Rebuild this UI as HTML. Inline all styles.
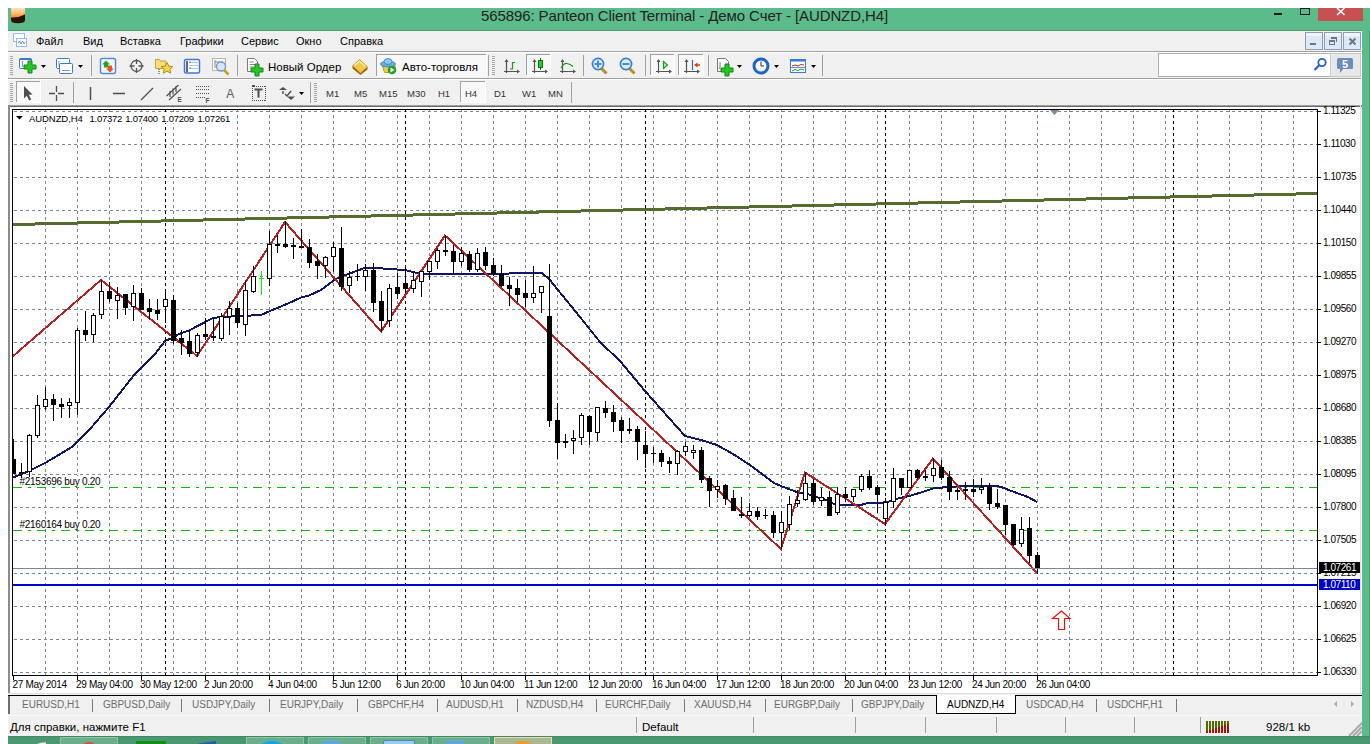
<!DOCTYPE html><html><head><meta charset="utf-8"><style>
*{margin:0;padding:0;box-sizing:border-box}
html,body{width:1370px;height:744px;overflow:hidden;background:#fff}
body{position:relative;font-family:"Liberation Sans",sans-serif;color:#000}
.a{position:absolute}
.t{position:absolute;white-space:nowrap;line-height:1}
.tb{position:absolute;background:#f0f0f0}
.pl{position:absolute;left:1323px;font-size:10px;letter-spacing:-0.45px;white-space:nowrap;line-height:10px}
.tl{position:absolute;top:680px;font-size:10px;letter-spacing:-0.33px;white-space:nowrap;line-height:10px}
.tab{position:absolute;top:699px;font-size:10px;color:#6d6d6d;white-space:nowrap;line-height:12px}
.sep{position:absolute;width:1px;background:#7a7a7a}
</style></head><body>
<div class="a" style="left:8px;top:8px;width:1362px;height:23px;background:#5bbb8a"></div>
<div class="a" style="left:1362px;top:31px;width:8px;height:705px;background:#5bbb8a"></div>
<div class="a" style="left:1318px;top:8px;width:45px;height:13px;background:#c75050"></div>
<div class="t" style="left:481px;top:8px;font-size:15px;line-height:16px;letter-spacing:-0.1px;color:#222">565896: Panteon Client Terminal - Демо Счет - [AUDNZD,H4]</div>
<div class="tb" style="left:8px;top:31px;width:1354px;height:74px"></div>
<div class="a" style="left:8px;top:51px;width:1354px;height:1px;background:#a0a0a0"></div>
<div class="a" style="left:8px;top:52px;width:1354px;height:1px;background:#fff"></div>
<div class="a" style="left:8px;top:78px;width:1354px;height:1px;background:#a0a0a0"></div>
<div class="a" style="left:8px;top:79px;width:1354px;height:1px;background:#fff"></div>
<div class="t" style="left:36px;top:35px;font-size:11px;line-height:12px">Файл</div>
<div class="t" style="left:83px;top:35px;font-size:11px;line-height:12px">Вид</div>
<div class="t" style="left:120px;top:35px;font-size:11px;line-height:12px">Вставка</div>
<div class="t" style="left:180px;top:35px;font-size:11px;line-height:12px">Графики</div>
<div class="t" style="left:241px;top:35px;font-size:11px;line-height:12px">Сервис</div>
<div class="t" style="left:296px;top:35px;font-size:11px;line-height:12px">Окно</div>
<div class="t" style="left:340px;top:35px;font-size:11px;line-height:12px">Справка</div>
<svg width="1370" height="80" viewBox="0 28 1370 80" style="position:absolute;left:0;top:28px">
<rect x="13" y="32" width="16" height="17" fill="#f6f6f6"/>
<rect x="13.5" y="33.5" width="11" height="8" fill="#fff" stroke="#3a7af0" stroke-width="1" stroke-dasharray="1 1"/>
<rect x="16.5" y="38.5" width="10" height="8" fill="#fff" stroke="#3a7af0" stroke-width="1" stroke-dasharray="1 1"/>
<path d="M18,43 l1.5,-2 1.5,3 1.5,-3 1.5,3 1.5,-2" stroke="#3a7af0" stroke-width="0.8" fill="none"/>
<rect x="1305.5" y="32.5" width="17" height="17" fill="#dde9f6" stroke="#8e9cac" stroke-width="1"/>
<rect x="1306" y="33" width="16" height="3" fill="#eef5fc"/>
<rect x="1324.5" y="32.5" width="17" height="17" fill="#dde9f6" stroke="#8e9cac" stroke-width="1"/>
<rect x="1325" y="33" width="16" height="3" fill="#eef5fc"/>
<rect x="1343.5" y="32.5" width="17" height="17" fill="#dde9f6" stroke="#8e9cac" stroke-width="1"/>
<rect x="1344" y="33" width="16" height="3" fill="#eef5fc"/>
<rect x="1310" y="43" width="6" height="2" fill="#6a7888"/>
<path d="M1331.5,38 h5 v4" fill="none" stroke="#6a7888" stroke-width="1"/><rect x="1331" y="37" width="6" height="2" fill="#6a7888"/>
<rect x="1329.5" y="40.5" width="5" height="4" fill="#dde9f6" stroke="#6a7888" stroke-width="1"/><rect x="1329" y="40" width="6" height="2" fill="#6a7888"/>
<path d="M1349.5,38.5 l6,6 M1355.5,38.5 l-6,6" stroke="#6a7888" stroke-width="2"/>
<rect x="10" y="56" width="3" height="1" fill="#a6a6a6"/><rect x="10" y="58" width="3" height="1" fill="#a6a6a6"/><rect x="10" y="60" width="3" height="1" fill="#a6a6a6"/><rect x="10" y="62" width="3" height="1" fill="#a6a6a6"/><rect x="10" y="64" width="3" height="1" fill="#a6a6a6"/><rect x="10" y="66" width="3" height="1" fill="#a6a6a6"/><rect x="10" y="68" width="3" height="1" fill="#a6a6a6"/><rect x="10" y="70" width="3" height="1" fill="#a6a6a6"/><rect x="10" y="72" width="3" height="1" fill="#a6a6a6"/><rect x="10" y="74" width="3" height="1" fill="#a6a6a6"/>
<rect x="19.5" y="58.5" width="12" height="10" rx="1" fill="#fff" stroke="#3c78c8" stroke-width="1"/>
<rect x="19.5" y="58.5" width="12" height="1.5" fill="#3c78c8"/>
<path d="M22.5,61 v6" stroke="#7a9ccc" stroke-width="1"/>
<path d="M28,61 h4 v4 h4 v4 h-4 v4 h-4 v-4 h-4 v-4 h4 z" fill="#27c527" stroke="#118811" stroke-width="1" stroke-linejoin="miter"/>
<polygon points="41,65 46,65 43.5,68" fill="#000"/>
<rect x="56.5" y="58.5" width="13" height="10" rx="1" fill="#fff" stroke="#3c78c8" stroke-width="1"/>
<path d="M59,61 v5 M59,64.5 h8" stroke="#7a9ccc" stroke-width="1"/>
<rect x="59.5" y="63.5" width="13" height="10" rx="1" fill="#fff" stroke="#3c78c8" stroke-width="1"/>
<path d="M62,70.5 h8" stroke="#7a9ccc" stroke-width="1"/>
<polygon points="78,65 83,65 80.5,68" fill="#000"/>
<rect x="91" y="55" width="1" height="21" fill="#a0a0a0"/>
<rect x="100.5" y="58.5" width="15" height="15" rx="2" fill="#fff" stroke="#4a8ad8" stroke-width="1.5"/>
<path d="M103,63h10 M103,67h10 M103,71h10" stroke="#dde" stroke-width="1"/>
<polygon points="106,60.5 110,64.5 108,64.5 108,67.5 104,67.5 104,64.5 102,64.5" fill="#2aa02a"/>
<polygon points="110,72.5 114,68.5 112,68.5 112,65.5 108,65.5 108,68.5 106,68.5" fill="#e8502a"/>
<circle cx="136.5" cy="66" r="5.5" fill="none" stroke="#555" stroke-width="1.3"/>
<path d="M129.5,66 h5 M138.5,66 h5 M136.5,59 v5 M136.5,68 v5" stroke="#555" stroke-width="1.3"/>
<path d="M155.5,59.5 h4 l1,1.5 h5.5 v7.5 h-10.5 z" fill="#f5dc7c" stroke="#c8a23a" stroke-width="1"/>
<path d="M159,69 v5" stroke="#333" stroke-width="1" stroke-dasharray="1 1"/>
<polygon points="167,62.5 168.8,66.2 172.8,66.6 169.8,69.2 170.7,73.2 167,71.1 163.3,73.2 164.2,69.2 161.2,66.6 165.2,66.2" fill="#f2d648" stroke="#b88a10" stroke-width="1"/>
<rect x="184.5" y="59.5" width="15" height="13.5" rx="1.5" fill="#fff" stroke="#3a7bd5" stroke-width="1.5"/>
<rect x="186" y="61" width="2" height="11" fill="#5a6a80"/>
<path d="M189,62.5h9 M189,65.5h9 M189,68.5h9" stroke="#a8c4ec" stroke-width="1"/>
<rect x="189.5" y="61.5" width="1.2" height="1.2" fill="#e02020"/><rect x="189.5" y="67.5" width="1.2" height="1.2" fill="#e02020"/>
<rect x="212.5" y="58.5" width="13" height="12" fill="#fafafa" stroke="#bdb29a" stroke-width="1"/>
<path d="M215,60 v8 M215,62 h8" stroke="#888" stroke-width="1"/>
<circle cx="221" cy="66.5" r="4.5" fill="#d6e8f8" stroke="#6a9ad8" stroke-width="1.3"/>
<path d="M224,70 l4.5,4.5" stroke="#c8a020" stroke-width="2.5"/>
<rect x="237" y="55" width="1" height="21" fill="#a0a0a0"/>
<path d="M247.5,58.5 h7 l3,3 v10 h-10 z" fill="#fff" stroke="#7a7a7a" stroke-width="1"/>
<path d="M249.5,62h4 M249.5,64.5h6 M249.5,67h5" stroke="#8a8a8a" stroke-width="1"/>
<path d="M255,64 h4 v4 h4 v4 h-4 v4 h-4 v-4 h-4 v-4 h4 z" fill="#27c527" stroke="#118811" stroke-width="1" stroke-linejoin="miter"/>
<polygon points="352.5,66 360.5,73 367.5,67 367.5,69.5 360.5,75 352.5,68.5" fill="#9a6410"/>
<polygon points="352.5,66 359.5,59.5 367.5,67 360.5,73" fill="#f2c848" stroke="#b07818" stroke-width="0.8"/>
<path d="M354.5,65.5 l5,-4.5 l6,5.5" stroke="#fff0b0" stroke-width="1.2" fill="none"/>
<rect x="376" y="54" width="111" height="23" fill="#f8f8f8"/><rect x="376" y="54" width="111" height="1" fill="#a0a0a0"/><rect x="376" y="54" width="1" height="23" fill="#a0a0a0"/><rect x="376" y="76" width="111" height="1" fill="#fff"/><rect x="486" y="54" width="1" height="23" fill="#fff"/>
<path d="M382.5,66 l2,6.5 h9 l2,-6.5 z" fill="#f0d050" stroke="#c09a20" stroke-width="1"/>
<ellipse cx="388" cy="64" rx="7.5" ry="3" fill="#6aaee0" stroke="#3a7ab8" stroke-width="0.8"/>
<ellipse cx="388" cy="61.5" rx="4" ry="3" fill="#8ac8f0" stroke="#3a7ab8" stroke-width="0.8"/>
<circle cx="392" cy="70" r="4.3" fill="#1fa51f"/>
<polygon points="390.5,67.5 394.5,70 390.5,72.5" fill="#fff"/>
<rect x="488" y="55" width="1" height="21" fill="#a0a0a0"/>
<rect x="492" y="56" width="3" height="1" fill="#a6a6a6"/><rect x="492" y="58" width="3" height="1" fill="#a6a6a6"/><rect x="492" y="60" width="3" height="1" fill="#a6a6a6"/><rect x="492" y="62" width="3" height="1" fill="#a6a6a6"/><rect x="492" y="64" width="3" height="1" fill="#a6a6a6"/><rect x="492" y="66" width="3" height="1" fill="#a6a6a6"/><rect x="492" y="68" width="3" height="1" fill="#a6a6a6"/><rect x="492" y="70" width="3" height="1" fill="#a6a6a6"/><rect x="492" y="72" width="3" height="1" fill="#a6a6a6"/><rect x="492" y="74" width="3" height="1" fill="#a6a6a6"/>
<path d="M506.5,60 V73 M504,71.5 H518" stroke="#555" stroke-width="1.2" fill="none"/><polygon points="504.5,62 508.5,62 506.5,59" fill="#555"/><polygon points="517,69.5 517,73.5 520,71.5" fill="#555"/>
<path d="M512.5,62 v7.5 M510,69 h2.5 M512.5,62.5 h2.5" stroke="#1a9a1a" stroke-width="1.2" fill="none"/>
<rect x="526" y="54" width="25" height="22" fill="#f8f8f8"/><rect x="526" y="54" width="25" height="1" fill="#a0a0a0"/><rect x="526" y="54" width="1" height="22" fill="#a0a0a0"/><rect x="526" y="75" width="25" height="1" fill="#fff"/><rect x="550" y="54" width="1" height="22" fill="#fff"/>
<path d="M534.5,60 V73 M532,71.5 H546" stroke="#555" stroke-width="1.2" fill="none"/><polygon points="532.5,62 536.5,62 534.5,59" fill="#555"/><polygon points="545,69.5 545,73.5 548,71.5" fill="#555"/>
<path d="M540.5,58 v12" stroke="#0a7a0a" stroke-width="1"/>
<rect x="538.5" y="60.5" width="4" height="7" fill="#22d022" stroke="#0a7a0a" stroke-width="1"/>
<path d="M562.5,60 V73 M560,71.5 H574" stroke="#555" stroke-width="1.2" fill="none"/><polygon points="560.5,62 564.5,62 562.5,59" fill="#555"/><polygon points="573,69.5 573,73.5 576,71.5" fill="#555"/>
<path d="M561,68 q3,-5 6,-4.5 q3,0.5 6,3" stroke="#1a9a1a" stroke-width="1.2" fill="none"/>
<rect x="583" y="55" width="1" height="21" fill="#a0a0a0"/>
<path d="M601,68 l5.5,5.5" stroke="#b89018" stroke-width="3"/>
<circle cx="598" cy="64" r="5.6" fill="#dcecfa" stroke="#3a7bd5" stroke-width="1.6"/>
<path d="M594.5,64 h7 M598,60.5 v7" stroke="#4a8ad8" stroke-width="2"/>
<path d="M629,68 l5.5,5.5" stroke="#b89018" stroke-width="3"/>
<circle cx="626" cy="64" r="5.6" fill="#dcecfa" stroke="#3a7bd5" stroke-width="1.6"/>
<rect x="622.5" y="63" width="7" height="2" fill="#4a8ad8"/>
<rect x="645" y="55" width="1" height="21" fill="#a0a0a0"/>
<rect x="650" y="54" width="25" height="22" fill="#f8f8f8"/><rect x="650" y="54" width="25" height="1" fill="#a0a0a0"/><rect x="650" y="54" width="1" height="22" fill="#a0a0a0"/><rect x="650" y="75" width="25" height="1" fill="#fff"/><rect x="674" y="54" width="1" height="22" fill="#fff"/>
<path d="M658.5,60 V73 M656,71.5 H670" stroke="#555" stroke-width="1.2" fill="none"/><polygon points="656.5,62 660.5,62 658.5,59" fill="#555"/><polygon points="669,69.5 669,73.5 672,71.5" fill="#555"/>
<polygon points="663.5,61.5 667.5,65 663.5,68.5" fill="#c8f0c8" stroke="#1a9a1a" stroke-width="1.2"/>
<rect x="678" y="54" width="26" height="22" fill="#f8f8f8"/><rect x="678" y="54" width="26" height="1" fill="#a0a0a0"/><rect x="678" y="54" width="1" height="22" fill="#a0a0a0"/><rect x="678" y="75" width="26" height="1" fill="#fff"/><rect x="703" y="54" width="1" height="22" fill="#fff"/>
<path d="M686.5,60 V73 M684,71.5 H698" stroke="#555" stroke-width="1.2" fill="none"/><polygon points="684.5,62 688.5,62 686.5,59" fill="#555"/><polygon points="697,69.5 697,73.5 700,71.5" fill="#555"/>
<path d="M692.5,60 v10" stroke="#2a6ac8" stroke-width="1.2"/>
<polygon points="694,65 697.5,62.5 697.5,64.3 700,64.3 700,65.7 697.5,65.7 697.5,67.5" fill="#d83a1a"/>
<rect x="708" y="55" width="1" height="21" fill="#a0a0a0"/>
<path d="M717.5,58.5 h8 l3,3 v10 h-11 z" fill="#fff" stroke="#777" stroke-width="1"/>
<path d="M720,62 v6 q-1,0 -1,1" stroke="#777" stroke-width="1" fill="none"/>
<path d="M725,64 h4 v4 h4 v4 h-4 v4 h-4 v-4 h-4 v-4 h4 z" fill="#27c527" stroke="#118811" stroke-width="1" stroke-linejoin="miter"/>
<polygon points="737,65 742,65 739.5,68" fill="#000"/>
<circle cx="761" cy="66" r="7" fill="#f4f8ff" stroke="#1e62c8" stroke-width="3"/>
<path d="M761,61.5 v4.5 h3" stroke="#333" stroke-width="1" fill="none"/>
<polygon points="774,65 779,65 776.5,68" fill="#000"/>
<rect x="790.5" y="59.5" width="15" height="13" fill="#fff" stroke="#3a7bd5" stroke-width="1"/>
<rect x="790.5" y="59.5" width="15" height="2" fill="#3a7bd5"/>
<path d="M792,66 l3,-1 3,1 3,-1.5 3,0.5" stroke="#b83020" stroke-width="1" fill="none"/>
<path d="M792,71 l3,-1.5 3,1 3,-1.5 3,1" stroke="#22a022" stroke-width="1" fill="none"/>
<path d="M791,67.5 h14" stroke="#3a7bd5" stroke-width="0.8"/>
<polygon points="811,65 816,65 813.5,68" fill="#000"/>
<rect x="822" y="55" width="1" height="21" fill="#a0a0a0"/>
<rect x="1158.5" y="53.5" width="172" height="23" fill="#fff" stroke="#b0b0b0" stroke-width="1"/>
<circle cx="1322" cy="62.5" r="3.7" fill="none" stroke="#2a62c0" stroke-width="1.8"/>
<path d="M1319.5,65 l-5,5" stroke="#2a62c0" stroke-width="2.2"/>
<rect x="1330.5" y="53.5" width="30" height="23" fill="#e8e8e8" stroke="#c8c8c8" stroke-width="1"/>
<rect x="1337" y="58" width="16" height="11" rx="1.5" fill="#6a8cc0"/>
<polygon points="1340,68 1344,68 1340,73" fill="#6a8cc0"/>
<text x="1345" y="67.5" font-family="Liberation Sans" font-size="11" font-weight="bold" fill="#fff" text-anchor="middle">5</text>
<rect x="10" y="83" width="3" height="1" fill="#a6a6a6"/><rect x="10" y="85" width="3" height="1" fill="#a6a6a6"/><rect x="10" y="87" width="3" height="1" fill="#a6a6a6"/><rect x="10" y="89" width="3" height="1" fill="#a6a6a6"/><rect x="10" y="91" width="3" height="1" fill="#a6a6a6"/><rect x="10" y="93" width="3" height="1" fill="#a6a6a6"/><rect x="10" y="95" width="3" height="1" fill="#a6a6a6"/><rect x="10" y="97" width="3" height="1" fill="#a6a6a6"/><rect x="10" y="99" width="3" height="1" fill="#a6a6a6"/><rect x="10" y="101" width="3" height="1" fill="#a6a6a6"/>
<rect x="16" y="81" width="25" height="22" fill="#f8f8f8"/><rect x="16" y="81" width="25" height="1" fill="#a0a0a0"/><rect x="16" y="81" width="1" height="22" fill="#a0a0a0"/><rect x="16" y="102" width="25" height="1" fill="#fff"/><rect x="40" y="81" width="1" height="22" fill="#fff"/>
<polygon points="24,86 24,98.5 26.8,95.8 29.2,100.5 31.2,99.5 28.8,94.8 32.5,94.5" fill="#4e4e4e"/>
<path d="M49,93.5 h6 M58,93.5 h6 M56.5,86 v6 M56.5,95 v6" stroke="#4e4e4e" stroke-width="1.3"/>
<rect x="73" y="82" width="1" height="21" fill="#a0a0a0"/>
<path d="M90.5,87 v13" stroke="#4e4e4e" stroke-width="1.5"/>
<path d="M113,93.5 h12" stroke="#4e4e4e" stroke-width="1.5"/>
<path d="M141,100 l12,-12" stroke="#4e4e4e" stroke-width="1.3"/>
<path d="M166.5,96 l12,-11 M169,100 l12,-11 M170,91 v6 M173,88.5 v6 M176,86 v6" stroke="#4e4e4e" stroke-width="1.2" fill="none"/>
<text x="177.5" y="102" font-family="Liberation Sans" font-size="6.5" font-weight="bold" fill="#4e4e4e">E</text>
<rect x="196" y="86" width="1" height="1" fill="#4e4e4e"/>
<rect x="198" y="86" width="1" height="1" fill="#4e4e4e"/>
<rect x="200" y="86" width="1" height="1" fill="#4e4e4e"/>
<rect x="202" y="86" width="1" height="1" fill="#4e4e4e"/>
<rect x="204" y="86" width="1" height="1" fill="#4e4e4e"/>
<rect x="206" y="86" width="1" height="1" fill="#4e4e4e"/>
<rect x="208" y="86" width="1" height="1" fill="#4e4e4e"/>
<rect x="196" y="89" width="1" height="1" fill="#4e4e4e"/>
<rect x="198" y="89" width="1" height="1" fill="#4e4e4e"/>
<rect x="200" y="89" width="1" height="1" fill="#4e4e4e"/>
<rect x="202" y="89" width="1" height="1" fill="#4e4e4e"/>
<rect x="204" y="89" width="1" height="1" fill="#4e4e4e"/>
<rect x="206" y="89" width="1" height="1" fill="#4e4e4e"/>
<rect x="208" y="89" width="1" height="1" fill="#4e4e4e"/>
<rect x="196" y="93" width="1" height="1" fill="#4e4e4e"/>
<rect x="198" y="93" width="1" height="1" fill="#4e4e4e"/>
<rect x="200" y="93" width="1" height="1" fill="#4e4e4e"/>
<rect x="202" y="93" width="1" height="1" fill="#4e4e4e"/>
<rect x="204" y="93" width="1" height="1" fill="#4e4e4e"/>
<rect x="206" y="93" width="1" height="1" fill="#4e4e4e"/>
<rect x="208" y="93" width="1" height="1" fill="#4e4e4e"/>
<rect x="196" y="97" width="1" height="1" fill="#4e4e4e"/>
<rect x="198" y="97" width="1" height="1" fill="#4e4e4e"/>
<rect x="200" y="97" width="1" height="1" fill="#4e4e4e"/>
<rect x="202" y="97" width="1" height="1" fill="#4e4e4e"/>
<rect x="204" y="97" width="1" height="1" fill="#4e4e4e"/>
<text x="205.5" y="102.5" font-family="Liberation Sans" font-size="6.5" font-weight="bold" fill="#4e4e4e">F</text>
<text x="226.3" y="98" font-family="Liberation Sans" font-size="12" fill="#5a5a5a">A</text>
<rect x="252" y="86" width="1" height="1" fill="#4e4e4e"/><rect x="252" y="100" width="1" height="1" fill="#4e4e4e"/>
<rect x="254" y="86" width="1" height="1" fill="#4e4e4e"/><rect x="254" y="100" width="1" height="1" fill="#4e4e4e"/>
<rect x="256" y="86" width="1" height="1" fill="#4e4e4e"/><rect x="256" y="100" width="1" height="1" fill="#4e4e4e"/>
<rect x="258" y="86" width="1" height="1" fill="#4e4e4e"/><rect x="258" y="100" width="1" height="1" fill="#4e4e4e"/>
<rect x="260" y="86" width="1" height="1" fill="#4e4e4e"/><rect x="260" y="100" width="1" height="1" fill="#4e4e4e"/>
<rect x="262" y="86" width="1" height="1" fill="#4e4e4e"/><rect x="262" y="100" width="1" height="1" fill="#4e4e4e"/>
<rect x="264" y="86" width="1" height="1" fill="#4e4e4e"/><rect x="264" y="100" width="1" height="1" fill="#4e4e4e"/>
<rect x="252" y="86" width="1" height="1" fill="#4e4e4e"/><rect x="265" y="86" width="1" height="1" fill="#4e4e4e"/>
<rect x="252" y="88" width="1" height="1" fill="#4e4e4e"/><rect x="265" y="88" width="1" height="1" fill="#4e4e4e"/>
<rect x="252" y="90" width="1" height="1" fill="#4e4e4e"/><rect x="265" y="90" width="1" height="1" fill="#4e4e4e"/>
<rect x="252" y="92" width="1" height="1" fill="#4e4e4e"/><rect x="265" y="92" width="1" height="1" fill="#4e4e4e"/>
<rect x="252" y="94" width="1" height="1" fill="#4e4e4e"/><rect x="265" y="94" width="1" height="1" fill="#4e4e4e"/>
<rect x="252" y="96" width="1" height="1" fill="#4e4e4e"/><rect x="265" y="96" width="1" height="1" fill="#4e4e4e"/>
<rect x="252" y="98" width="1" height="1" fill="#4e4e4e"/><rect x="265" y="98" width="1" height="1" fill="#4e4e4e"/>
<rect x="252" y="100" width="1" height="1" fill="#4e4e4e"/><rect x="265" y="100" width="1" height="1" fill="#4e4e4e"/>
<rect x="252" y="85" width="3" height="2" fill="#4e4e4e"/>
<path d="M254.5,89.5 h8 M258.5,89.5 v8" stroke="#4e4e4e" stroke-width="2"/>
<polygon points="283,87 287,90 279,90" fill="#4e4e4e"/><polygon points="291,100 295,96.5 287,96.5" fill="#4e4e4e"/>
<path d="M283,91 v3 M285,94 l2,2 l4,-5" stroke="#4e4e4e" stroke-width="1.5" fill="none"/>
<polygon points="299,92 304,92 301.5,95" fill="#000"/>
<rect x="310" y="82" width="1" height="21" fill="#a0a0a0"/>
<rect x="314" y="83" width="3" height="1" fill="#a6a6a6"/><rect x="314" y="85" width="3" height="1" fill="#a6a6a6"/><rect x="314" y="87" width="3" height="1" fill="#a6a6a6"/><rect x="314" y="89" width="3" height="1" fill="#a6a6a6"/><rect x="314" y="91" width="3" height="1" fill="#a6a6a6"/><rect x="314" y="93" width="3" height="1" fill="#a6a6a6"/><rect x="314" y="95" width="3" height="1" fill="#a6a6a6"/><rect x="314" y="97" width="3" height="1" fill="#a6a6a6"/><rect x="314" y="99" width="3" height="1" fill="#a6a6a6"/><rect x="314" y="101" width="3" height="1" fill="#a6a6a6"/>
<rect x="460" y="81" width="26" height="22" fill="#f8f8f8"/><rect x="460" y="81" width="26" height="1" fill="#a0a0a0"/><rect x="460" y="81" width="1" height="22" fill="#a0a0a0"/><rect x="460" y="102" width="26" height="1" fill="#fff"/><rect x="485" y="81" width="1" height="22" fill="#fff"/>
<rect x="571" y="82" width="1" height="21" fill="#a0a0a0"/>
</svg>
<div class="t" style="left:268px;top:60.5px;font-size:11.5px;line-height:12px">Новый Ордер</div>
<div class="t" style="left:402px;top:60.5px;font-size:11.5px;line-height:12px">Авто-торговля</div>
<div class="t" style="left:326px;top:89px;font-size:9.5px;line-height:10px;color:#333">M1</div>
<div class="t" style="left:354px;top:89px;font-size:9.5px;line-height:10px;color:#333">M5</div>
<div class="t" style="left:379px;top:89px;font-size:9.5px;line-height:10px;color:#333">M15</div>
<div class="t" style="left:407px;top:89px;font-size:9.5px;line-height:10px;color:#333">M30</div>
<div class="t" style="left:438px;top:89px;font-size:9.5px;line-height:10px;color:#333">H1</div>
<div class="t" style="left:465px;top:89px;font-size:9.5px;line-height:10px;color:#333">H4</div>
<div class="t" style="left:494px;top:89px;font-size:9.5px;line-height:10px;color:#333">D1</div>
<div class="t" style="left:522px;top:89px;font-size:9.5px;line-height:10px;color:#333">W1</div>
<div class="t" style="left:548px;top:89px;font-size:9.5px;line-height:10px;color:#333">MN</div>
<div class="a" style="left:8px;top:105px;width:1354px;height:1px;background:#a0a0a0"></div>
<div class="a" style="left:8px;top:106px;width:1354px;height:1px;background:#696969"></div>
<div class="a" style="left:8px;top:105px;width:2px;height:589px;background:#8c8c8c"></div>
<svg width="1370" height="744" viewBox="0 0 1370 744" style="position:absolute;left:0;top:0" shape-rendering="crispEdges">
<defs><clipPath id="cc"><rect x="13" y="110" width="1304" height="565"/></clipPath></defs>
<g clip-path="url(#cc)">
<line x1="13" y1="111.5" x2="1317" y2="111.5" stroke="#778899" stroke-width="1" stroke-dasharray="3 3" stroke-dashoffset="5"/>
<line x1="13" y1="144.5" x2="1317" y2="144.5" stroke="#778899" stroke-width="1" stroke-dasharray="3 3" stroke-dashoffset="5"/>
<line x1="13" y1="177.5" x2="1317" y2="177.5" stroke="#778899" stroke-width="1" stroke-dasharray="3 3" stroke-dashoffset="5"/>
<line x1="13" y1="210.5" x2="1317" y2="210.5" stroke="#778899" stroke-width="1" stroke-dasharray="3 3" stroke-dashoffset="5"/>
<line x1="13" y1="243.5" x2="1317" y2="243.5" stroke="#778899" stroke-width="1" stroke-dasharray="3 3" stroke-dashoffset="5"/>
<line x1="13" y1="276.5" x2="1317" y2="276.5" stroke="#778899" stroke-width="1" stroke-dasharray="3 3" stroke-dashoffset="5"/>
<line x1="13" y1="309.5" x2="1317" y2="309.5" stroke="#778899" stroke-width="1" stroke-dasharray="3 3" stroke-dashoffset="5"/>
<line x1="13" y1="342.5" x2="1317" y2="342.5" stroke="#778899" stroke-width="1" stroke-dasharray="3 3" stroke-dashoffset="5"/>
<line x1="13" y1="375.5" x2="1317" y2="375.5" stroke="#778899" stroke-width="1" stroke-dasharray="3 3" stroke-dashoffset="5"/>
<line x1="13" y1="408.5" x2="1317" y2="408.5" stroke="#778899" stroke-width="1" stroke-dasharray="3 3" stroke-dashoffset="5"/>
<line x1="13" y1="441.5" x2="1317" y2="441.5" stroke="#778899" stroke-width="1" stroke-dasharray="3 3" stroke-dashoffset="5"/>
<line x1="13" y1="474.5" x2="1317" y2="474.5" stroke="#778899" stroke-width="1" stroke-dasharray="3 3" stroke-dashoffset="5"/>
<line x1="13" y1="507.5" x2="1317" y2="507.5" stroke="#778899" stroke-width="1" stroke-dasharray="3 3" stroke-dashoffset="5"/>
<line x1="13" y1="540.5" x2="1317" y2="540.5" stroke="#778899" stroke-width="1" stroke-dasharray="3 3" stroke-dashoffset="5"/>
<line x1="13" y1="573.5" x2="1317" y2="573.5" stroke="#778899" stroke-width="1" stroke-dasharray="3 3" stroke-dashoffset="5"/>
<line x1="13" y1="606.5" x2="1317" y2="606.5" stroke="#778899" stroke-width="1" stroke-dasharray="3 3" stroke-dashoffset="5"/>
<line x1="13" y1="639.5" x2="1317" y2="639.5" stroke="#778899" stroke-width="1" stroke-dasharray="3 3" stroke-dashoffset="5"/>
<line x1="13" y1="672.5" x2="1317" y2="672.5" stroke="#778899" stroke-width="1" stroke-dasharray="3 3" stroke-dashoffset="5"/>
<line x1="45.5" y1="110" x2="45.5" y2="675" stroke="#778899" stroke-width="1" stroke-dasharray="3 3" stroke-dashoffset="1"/>
<line x1="77.5" y1="110" x2="77.5" y2="675" stroke="#778899" stroke-width="1" stroke-dasharray="3 3" stroke-dashoffset="1"/>
<line x1="109.5" y1="110" x2="109.5" y2="675" stroke="#778899" stroke-width="1" stroke-dasharray="3 3" stroke-dashoffset="1"/>
<line x1="141.5" y1="110" x2="141.5" y2="675" stroke="#778899" stroke-width="1" stroke-dasharray="3 3" stroke-dashoffset="1"/>
<line x1="173.5" y1="110" x2="173.5" y2="675" stroke="#778899" stroke-width="1" stroke-dasharray="3 3" stroke-dashoffset="1"/>
<line x1="205.5" y1="110" x2="205.5" y2="675" stroke="#778899" stroke-width="1" stroke-dasharray="3 3" stroke-dashoffset="1"/>
<line x1="237.5" y1="110" x2="237.5" y2="675" stroke="#778899" stroke-width="1" stroke-dasharray="3 3" stroke-dashoffset="1"/>
<line x1="269.5" y1="110" x2="269.5" y2="675" stroke="#778899" stroke-width="1" stroke-dasharray="3 3" stroke-dashoffset="1"/>
<line x1="301.5" y1="110" x2="301.5" y2="675" stroke="#778899" stroke-width="1" stroke-dasharray="3 3" stroke-dashoffset="1"/>
<line x1="333.5" y1="110" x2="333.5" y2="675" stroke="#778899" stroke-width="1" stroke-dasharray="3 3" stroke-dashoffset="1"/>
<line x1="365.5" y1="110" x2="365.5" y2="675" stroke="#778899" stroke-width="1" stroke-dasharray="3 3" stroke-dashoffset="1"/>
<line x1="397.5" y1="110" x2="397.5" y2="675" stroke="#778899" stroke-width="1" stroke-dasharray="3 3" stroke-dashoffset="1"/>
<line x1="429.5" y1="110" x2="429.5" y2="675" stroke="#778899" stroke-width="1" stroke-dasharray="3 3" stroke-dashoffset="1"/>
<line x1="461.5" y1="110" x2="461.5" y2="675" stroke="#778899" stroke-width="1" stroke-dasharray="3 3" stroke-dashoffset="1"/>
<line x1="493.5" y1="110" x2="493.5" y2="675" stroke="#778899" stroke-width="1" stroke-dasharray="3 3" stroke-dashoffset="1"/>
<line x1="525.5" y1="110" x2="525.5" y2="675" stroke="#778899" stroke-width="1" stroke-dasharray="3 3" stroke-dashoffset="1"/>
<line x1="557.5" y1="110" x2="557.5" y2="675" stroke="#778899" stroke-width="1" stroke-dasharray="3 3" stroke-dashoffset="1"/>
<line x1="589.5" y1="110" x2="589.5" y2="675" stroke="#778899" stroke-width="1" stroke-dasharray="3 3" stroke-dashoffset="1"/>
<line x1="621.5" y1="110" x2="621.5" y2="675" stroke="#778899" stroke-width="1" stroke-dasharray="3 3" stroke-dashoffset="1"/>
<line x1="653.5" y1="110" x2="653.5" y2="675" stroke="#778899" stroke-width="1" stroke-dasharray="3 3" stroke-dashoffset="1"/>
<line x1="685.5" y1="110" x2="685.5" y2="675" stroke="#778899" stroke-width="1" stroke-dasharray="3 3" stroke-dashoffset="1"/>
<line x1="717.5" y1="110" x2="717.5" y2="675" stroke="#778899" stroke-width="1" stroke-dasharray="3 3" stroke-dashoffset="1"/>
<line x1="749.5" y1="110" x2="749.5" y2="675" stroke="#778899" stroke-width="1" stroke-dasharray="3 3" stroke-dashoffset="1"/>
<line x1="781.5" y1="110" x2="781.5" y2="675" stroke="#778899" stroke-width="1" stroke-dasharray="3 3" stroke-dashoffset="1"/>
<line x1="813.5" y1="110" x2="813.5" y2="675" stroke="#778899" stroke-width="1" stroke-dasharray="3 3" stroke-dashoffset="1"/>
<line x1="845.5" y1="110" x2="845.5" y2="675" stroke="#778899" stroke-width="1" stroke-dasharray="3 3" stroke-dashoffset="1"/>
<line x1="877.5" y1="110" x2="877.5" y2="675" stroke="#778899" stroke-width="1" stroke-dasharray="3 3" stroke-dashoffset="1"/>
<line x1="909.5" y1="110" x2="909.5" y2="675" stroke="#778899" stroke-width="1" stroke-dasharray="3 3" stroke-dashoffset="1"/>
<line x1="941.5" y1="110" x2="941.5" y2="675" stroke="#778899" stroke-width="1" stroke-dasharray="3 3" stroke-dashoffset="1"/>
<line x1="973.5" y1="110" x2="973.5" y2="675" stroke="#778899" stroke-width="1" stroke-dasharray="3 3" stroke-dashoffset="1"/>
<line x1="1005.5" y1="110" x2="1005.5" y2="675" stroke="#778899" stroke-width="1" stroke-dasharray="3 3" stroke-dashoffset="1"/>
<line x1="1037.5" y1="110" x2="1037.5" y2="675" stroke="#778899" stroke-width="1" stroke-dasharray="3 3" stroke-dashoffset="1"/>
<line x1="1069.5" y1="110" x2="1069.5" y2="675" stroke="#778899" stroke-width="1" stroke-dasharray="3 3" stroke-dashoffset="1"/>
<line x1="1101.5" y1="110" x2="1101.5" y2="675" stroke="#778899" stroke-width="1" stroke-dasharray="3 3" stroke-dashoffset="1"/>
<line x1="1133.5" y1="110" x2="1133.5" y2="675" stroke="#778899" stroke-width="1" stroke-dasharray="3 3" stroke-dashoffset="1"/>
<line x1="1165.5" y1="110" x2="1165.5" y2="675" stroke="#778899" stroke-width="1" stroke-dasharray="3 3" stroke-dashoffset="1"/>
<line x1="1197.5" y1="110" x2="1197.5" y2="675" stroke="#778899" stroke-width="1" stroke-dasharray="3 3" stroke-dashoffset="1"/>
<line x1="1229.5" y1="110" x2="1229.5" y2="675" stroke="#778899" stroke-width="1" stroke-dasharray="3 3" stroke-dashoffset="1"/>
<line x1="1261.5" y1="110" x2="1261.5" y2="675" stroke="#778899" stroke-width="1" stroke-dasharray="3 3" stroke-dashoffset="1"/>
<line x1="1293.5" y1="110" x2="1293.5" y2="675" stroke="#778899" stroke-width="1" stroke-dasharray="3 3" stroke-dashoffset="1"/>
<line x1="165.5" y1="110" x2="165.5" y2="675" stroke="#000" stroke-width="1" stroke-dasharray="3 3" stroke-dashoffset="1"/>
<line x1="405.5" y1="110" x2="405.5" y2="675" stroke="#000" stroke-width="1" stroke-dasharray="3 3" stroke-dashoffset="1"/>
<line x1="645.5" y1="110" x2="645.5" y2="675" stroke="#000" stroke-width="1" stroke-dasharray="3 3" stroke-dashoffset="1"/>
<line x1="885.5" y1="110" x2="885.5" y2="675" stroke="#000" stroke-width="1" stroke-dasharray="3 3" stroke-dashoffset="1"/>
<line x1="1173.5" y1="110" x2="1173.5" y2="675" stroke="#000" stroke-width="1" stroke-dasharray="3 3" stroke-dashoffset="1"/>
<rect x="19" y="476" width="83" height="10" fill="#fff"/>
<rect x="19" y="519" width="83" height="10" fill="#fff"/>
<text x="19.5" y="485" font-family="Liberation Sans" font-size="10" letter-spacing="-0.28" fill="#000" shape-rendering="auto">#2153696 buy 0.20</text>
<text x="19.5" y="528" font-family="Liberation Sans" font-size="10" letter-spacing="-0.28" fill="#000" shape-rendering="auto">#2160164 buy 0.20</text>
<line x1="13" y1="487.5" x2="1317" y2="487.5" stroke="#00c000" stroke-width="1" stroke-dasharray="9 6 3 6" stroke-dashoffset="0"/>
<line x1="13" y1="530.5" x2="1317" y2="530.5" stroke="#00c000" stroke-width="1" stroke-dasharray="9 6 3 6" stroke-dashoffset="0"/>
<rect x="13" y="223" width="22" height="3" fill="#556b2f"/>
<rect x="35" y="222" width="42" height="3" fill="#556b2f"/>
<rect x="77" y="221" width="42" height="3" fill="#556b2f"/>
<rect x="119" y="220" width="42" height="3" fill="#556b2f"/>
<rect x="161" y="219" width="42" height="3" fill="#556b2f"/>
<rect x="203" y="218" width="42" height="3" fill="#556b2f"/>
<rect x="245" y="217" width="42" height="3" fill="#556b2f"/>
<rect x="287" y="216" width="42" height="3" fill="#556b2f"/>
<rect x="329" y="215" width="42" height="3" fill="#556b2f"/>
<rect x="371" y="214" width="42" height="3" fill="#556b2f"/>
<rect x="413" y="213" width="42" height="3" fill="#556b2f"/>
<rect x="455" y="212" width="42" height="3" fill="#556b2f"/>
<rect x="497" y="211" width="42" height="3" fill="#556b2f"/>
<rect x="539" y="210" width="42" height="3" fill="#556b2f"/>
<rect x="581" y="209" width="42" height="3" fill="#556b2f"/>
<rect x="623" y="208" width="42" height="3" fill="#556b2f"/>
<rect x="665" y="207" width="42" height="3" fill="#556b2f"/>
<rect x="707" y="206" width="42" height="3" fill="#556b2f"/>
<rect x="749" y="205" width="43" height="3" fill="#556b2f"/>
<rect x="792" y="204" width="42" height="3" fill="#556b2f"/>
<rect x="834" y="203" width="42" height="3" fill="#556b2f"/>
<rect x="876" y="202" width="42" height="3" fill="#556b2f"/>
<rect x="918" y="201" width="42" height="3" fill="#556b2f"/>
<rect x="960" y="200" width="42" height="3" fill="#556b2f"/>
<rect x="1002" y="199" width="42" height="3" fill="#556b2f"/>
<rect x="1044" y="198" width="42" height="3" fill="#556b2f"/>
<rect x="1086" y="197" width="42" height="3" fill="#556b2f"/>
<rect x="1128" y="196" width="42" height="3" fill="#556b2f"/>
<rect x="1170" y="195" width="42" height="3" fill="#556b2f"/>
<rect x="1212" y="194" width="42" height="3" fill="#556b2f"/>
<rect x="1254" y="193" width="42" height="3" fill="#556b2f"/>
<rect x="1296" y="192" width="21" height="3" fill="#556b2f"/>
<polyline points="12,478 29,471 45,463 72,447 90,429 109,407 134,375 155,354 165,341 172,338 179,334 189,330.5 213,318 221,317 261,315 270,311 288,303.5 302,297 308,296 321,290 335,279.5 344,275.5 354,272 363,268.5 370,267.5 389,269 405,270 421,274 493,274 541,272.5 549,279 580,317 600,342 620,361 645,391 669,418 685,436 701,440 717,445 733,454 750,465 770,480 774,483 782,486.5 797,492 809,494.5 826,500 834,504 841,505 861,505 866,503.5 880,503 889,501.5 898,498.5 911,495.5 924,491.5 933,488.5 941,488 944,487 968,486 997,486 1001,487 1016,492.7 1028,497 1037,502" fill="none" stroke="#141464" stroke-width="2"/>
<polyline points="12,357 101,280 197,356 285,222 381,331.5 445,235.5 781,549 805,472.5 885,524 933,458.5 1037,573" fill="none" stroke="#b22222" stroke-width="2"/>
<rect x="13" y="439" width="1" height="35" fill="#000"/>
<rect x="11" y="459" width="5" height="15" fill="#000"/>
<rect x="21" y="463" width="1" height="15" fill="#000"/>
<rect x="19" y="472" width="5" height="2" fill="#000"/>
<rect x="29" y="434" width="1" height="43" fill="#000"/>
<rect x="27" y="435" width="5" height="37" fill="#000"/>
<rect x="28" y="436" width="3" height="35" fill="#fff"/>
<rect x="37" y="395" width="1" height="43" fill="#000"/>
<rect x="35" y="405" width="5" height="31" fill="#000"/>
<rect x="36" y="406" width="3" height="29" fill="#fff"/>
<rect x="45" y="387" width="1" height="23" fill="#000"/>
<rect x="43" y="399" width="5" height="8" fill="#000"/>
<rect x="44" y="400" width="3" height="6" fill="#fff"/>
<rect x="53" y="394" width="1" height="27" fill="#000"/>
<rect x="51" y="399" width="5" height="6" fill="#000"/>
<rect x="61" y="398" width="1" height="20" fill="#000"/>
<rect x="59" y="404" width="5" height="3" fill="#000"/>
<rect x="69" y="398" width="1" height="20" fill="#000"/>
<rect x="67" y="402" width="5" height="4" fill="#000"/>
<rect x="68" y="403" width="3" height="2" fill="#fff"/>
<rect x="77" y="328" width="1" height="87" fill="#000"/>
<rect x="75" y="330" width="5" height="73" fill="#000"/>
<rect x="76" y="331" width="3" height="71" fill="#fff"/>
<rect x="85" y="311" width="1" height="30" fill="#000"/>
<rect x="83" y="330" width="5" height="5" fill="#000"/>
<rect x="93" y="313" width="1" height="29" fill="#000"/>
<rect x="91" y="315" width="5" height="20" fill="#000"/>
<rect x="92" y="316" width="3" height="18" fill="#fff"/>
<rect x="101" y="280" width="1" height="39" fill="#000"/>
<rect x="99" y="291" width="5" height="24" fill="#000"/>
<rect x="100" y="292" width="3" height="22" fill="#fff"/>
<rect x="109" y="282" width="1" height="20" fill="#000"/>
<rect x="107" y="291" width="5" height="8" fill="#000"/>
<rect x="117" y="287" width="1" height="32" fill="#000"/>
<rect x="115" y="295" width="5" height="6" fill="#000"/>
<rect x="116" y="296" width="3" height="4" fill="#fff"/>
<rect x="125" y="294" width="1" height="21" fill="#000"/>
<rect x="123" y="294" width="5" height="14" fill="#000"/>
<rect x="133" y="285" width="1" height="36" fill="#000"/>
<rect x="131" y="293" width="5" height="14" fill="#000"/>
<rect x="132" y="294" width="3" height="12" fill="#fff"/>
<rect x="141" y="288" width="1" height="22" fill="#000"/>
<rect x="139" y="293" width="5" height="17" fill="#000"/>
<rect x="149" y="299" width="1" height="20" fill="#000"/>
<rect x="147" y="308" width="5" height="4" fill="#000"/>
<rect x="157" y="299" width="1" height="21" fill="#000"/>
<rect x="155" y="310" width="5" height="4" fill="#000"/>
<rect x="165" y="289" width="1" height="34" fill="#000"/>
<rect x="163" y="299" width="5" height="8" fill="#000"/>
<rect x="164" y="300" width="3" height="6" fill="#fff"/>
<rect x="173" y="295" width="1" height="49" fill="#000"/>
<rect x="171" y="300" width="5" height="41" fill="#000"/>
<rect x="181" y="330" width="1" height="25" fill="#000"/>
<rect x="179" y="338" width="5" height="5" fill="#000"/>
<rect x="189" y="331" width="1" height="26" fill="#000"/>
<rect x="187" y="341" width="5" height="13" fill="#000"/>
<rect x="197" y="333" width="1" height="24" fill="#000"/>
<rect x="195" y="335" width="5" height="18" fill="#000"/>
<rect x="196" y="336" width="3" height="16" fill="#fff"/>
<rect x="205" y="318" width="1" height="22" fill="#000"/>
<rect x="203" y="334" width="5" height="3" fill="#000"/>
<rect x="213" y="318" width="1" height="23" fill="#000"/>
<rect x="211" y="336" width="5" height="2" fill="#000"/>
<rect x="221" y="313" width="1" height="28" fill="#000"/>
<rect x="219" y="316" width="5" height="23" fill="#000"/>
<rect x="220" y="317" width="3" height="21" fill="#fff"/>
<rect x="229" y="301" width="1" height="34" fill="#000"/>
<rect x="227" y="308" width="5" height="9" fill="#000"/>
<rect x="228" y="309" width="3" height="7" fill="#fff"/>
<rect x="237" y="303" width="1" height="25" fill="#000"/>
<rect x="235" y="308" width="5" height="15" fill="#000"/>
<rect x="245" y="281" width="1" height="55" fill="#000"/>
<rect x="243" y="290" width="5" height="35" fill="#000"/>
<rect x="244" y="291" width="3" height="33" fill="#fff"/>
<rect x="253" y="266" width="1" height="27" fill="#000"/>
<rect x="251" y="276" width="5" height="16" fill="#000"/>
<rect x="252" y="277" width="3" height="14" fill="#fff"/>
<rect x="261" y="271" width="1" height="24" fill="#00ff00"/>
<rect x="259" y="278" width="5" height="1" fill="#00ff00"/>
<rect x="269" y="231" width="1" height="55" fill="#000"/>
<rect x="267" y="244" width="5" height="35" fill="#000"/>
<rect x="268" y="245" width="3" height="33" fill="#fff"/>
<rect x="277" y="235" width="1" height="18" fill="#000"/>
<rect x="275" y="244" width="5" height="2" fill="#000"/>
<rect x="285" y="221" width="1" height="27" fill="#000"/>
<rect x="283" y="244" width="5" height="3" fill="#000"/>
<rect x="293" y="238" width="1" height="21" fill="#000"/>
<rect x="291" y="245" width="5" height="2" fill="#000"/>
<rect x="301" y="229" width="1" height="19" fill="#000"/>
<rect x="299" y="246" width="5" height="2" fill="#000"/>
<rect x="309" y="239" width="1" height="29" fill="#000"/>
<rect x="307" y="247" width="5" height="16" fill="#000"/>
<rect x="317" y="254" width="1" height="25" fill="#000"/>
<rect x="315" y="261" width="5" height="5" fill="#000"/>
<rect x="325" y="256" width="1" height="22" fill="#000"/>
<rect x="323" y="257" width="5" height="9" fill="#000"/>
<rect x="324" y="258" width="3" height="7" fill="#fff"/>
<rect x="333" y="242" width="1" height="30" fill="#000"/>
<rect x="331" y="247" width="5" height="10" fill="#000"/>
<rect x="332" y="248" width="3" height="8" fill="#fff"/>
<rect x="341" y="227" width="1" height="64" fill="#000"/>
<rect x="339" y="248" width="5" height="39" fill="#000"/>
<rect x="349" y="271" width="1" height="22" fill="#000"/>
<rect x="347" y="277" width="5" height="9" fill="#000"/>
<rect x="348" y="278" width="3" height="7" fill="#fff"/>
<rect x="357" y="264" width="1" height="17" fill="#000"/>
<rect x="355" y="276" width="5" height="1" fill="#000"/>
<rect x="365" y="264" width="1" height="27" fill="#000"/>
<rect x="363" y="270" width="5" height="7" fill="#000"/>
<rect x="364" y="271" width="3" height="5" fill="#fff"/>
<rect x="373" y="263" width="1" height="49" fill="#000"/>
<rect x="371" y="270" width="5" height="33" fill="#000"/>
<rect x="381" y="291" width="1" height="41" fill="#000"/>
<rect x="379" y="301" width="5" height="20" fill="#000"/>
<rect x="389" y="284" width="1" height="43" fill="#000"/>
<rect x="387" y="288" width="5" height="33" fill="#000"/>
<rect x="388" y="289" width="3" height="31" fill="#fff"/>
<rect x="397" y="273" width="1" height="26" fill="#000"/>
<rect x="395" y="287" width="5" height="7" fill="#000"/>
<rect x="405" y="265" width="1" height="28" fill="#000"/>
<rect x="403" y="283" width="5" height="6" fill="#000"/>
<rect x="413" y="272" width="1" height="21" fill="#000"/>
<rect x="411" y="280" width="5" height="9" fill="#000"/>
<rect x="412" y="281" width="3" height="7" fill="#fff"/>
<rect x="421" y="271" width="1" height="26" fill="#000"/>
<rect x="419" y="271" width="5" height="11" fill="#000"/>
<rect x="420" y="272" width="3" height="9" fill="#fff"/>
<rect x="429" y="261" width="1" height="19" fill="#000"/>
<rect x="427" y="261" width="5" height="11" fill="#000"/>
<rect x="428" y="262" width="3" height="9" fill="#fff"/>
<rect x="437" y="248" width="1" height="21" fill="#000"/>
<rect x="435" y="250" width="5" height="12" fill="#000"/>
<rect x="436" y="251" width="3" height="10" fill="#fff"/>
<rect x="445" y="235" width="1" height="21" fill="#000"/>
<rect x="443" y="250" width="5" height="2" fill="#000"/>
<rect x="453" y="245" width="1" height="29" fill="#000"/>
<rect x="451" y="251" width="5" height="11" fill="#000"/>
<rect x="461" y="247" width="1" height="19" fill="#000"/>
<rect x="459" y="253" width="5" height="9" fill="#000"/>
<rect x="460" y="254" width="3" height="7" fill="#fff"/>
<rect x="469" y="251" width="1" height="21" fill="#000"/>
<rect x="467" y="254" width="5" height="16" fill="#000"/>
<rect x="477" y="248" width="1" height="24" fill="#000"/>
<rect x="475" y="253" width="5" height="17" fill="#000"/>
<rect x="476" y="254" width="3" height="15" fill="#fff"/>
<rect x="485" y="247" width="1" height="23" fill="#000"/>
<rect x="483" y="252" width="5" height="14" fill="#000"/>
<rect x="493" y="258" width="1" height="18" fill="#000"/>
<rect x="491" y="265" width="5" height="9" fill="#000"/>
<rect x="501" y="265" width="1" height="22" fill="#000"/>
<rect x="499" y="274" width="5" height="12" fill="#000"/>
<rect x="509" y="277" width="1" height="29" fill="#000"/>
<rect x="507" y="285" width="5" height="4" fill="#000"/>
<rect x="517" y="279" width="1" height="23" fill="#000"/>
<rect x="515" y="288" width="5" height="7" fill="#000"/>
<rect x="525" y="280" width="1" height="27" fill="#000"/>
<rect x="523" y="293" width="5" height="5" fill="#000"/>
<rect x="533" y="266" width="1" height="37" fill="#000"/>
<rect x="531" y="293" width="5" height="5" fill="#000"/>
<rect x="532" y="294" width="3" height="3" fill="#fff"/>
<rect x="541" y="286" width="1" height="27" fill="#000"/>
<rect x="539" y="286" width="5" height="7" fill="#000"/>
<rect x="540" y="287" width="3" height="5" fill="#fff"/>
<rect x="549" y="264" width="1" height="163" fill="#000"/>
<rect x="547" y="316" width="5" height="105" fill="#000"/>
<rect x="557" y="403" width="1" height="56" fill="#000"/>
<rect x="555" y="420" width="5" height="23" fill="#000"/>
<rect x="565" y="434" width="1" height="14" fill="#000"/>
<rect x="563" y="441" width="5" height="2" fill="#000"/>
<rect x="573" y="430" width="1" height="24" fill="#000"/>
<rect x="571" y="438" width="5" height="3" fill="#000"/>
<rect x="572" y="439" width="3" height="1" fill="#fff"/>
<rect x="581" y="413" width="1" height="32" fill="#000"/>
<rect x="579" y="415" width="5" height="23" fill="#000"/>
<rect x="580" y="416" width="3" height="21" fill="#fff"/>
<rect x="589" y="415" width="1" height="30" fill="#000"/>
<rect x="587" y="416" width="5" height="16" fill="#000"/>
<rect x="597" y="407" width="1" height="34" fill="#000"/>
<rect x="595" y="407" width="5" height="26" fill="#000"/>
<rect x="596" y="408" width="3" height="24" fill="#fff"/>
<rect x="605" y="401" width="1" height="17" fill="#000"/>
<rect x="603" y="408" width="5" height="5" fill="#000"/>
<rect x="613" y="405" width="1" height="27" fill="#000"/>
<rect x="611" y="412" width="5" height="10" fill="#000"/>
<rect x="621" y="417" width="1" height="26" fill="#000"/>
<rect x="619" y="420" width="5" height="11" fill="#000"/>
<rect x="629" y="418" width="1" height="16" fill="#000"/>
<rect x="627" y="429" width="5" height="2" fill="#000"/>
<rect x="637" y="426" width="1" height="34" fill="#000"/>
<rect x="635" y="429" width="5" height="13" fill="#000"/>
<rect x="645" y="431" width="1" height="37" fill="#000"/>
<rect x="643" y="445" width="5" height="9" fill="#000"/>
<rect x="653" y="447" width="1" height="16" fill="#000"/>
<rect x="651" y="453" width="5" height="1" fill="#000"/>
<rect x="661" y="450" width="1" height="17" fill="#000"/>
<rect x="659" y="453" width="5" height="9" fill="#000"/>
<rect x="669" y="457" width="1" height="16" fill="#000"/>
<rect x="667" y="461" width="5" height="3" fill="#000"/>
<rect x="677" y="450" width="1" height="25" fill="#000"/>
<rect x="675" y="451" width="5" height="13" fill="#000"/>
<rect x="676" y="452" width="3" height="11" fill="#fff"/>
<rect x="685" y="442" width="1" height="14" fill="#000"/>
<rect x="683" y="446" width="5" height="6" fill="#000"/>
<rect x="684" y="447" width="3" height="4" fill="#fff"/>
<rect x="693" y="445" width="1" height="14" fill="#000"/>
<rect x="691" y="450" width="5" height="3" fill="#000"/>
<rect x="692" y="451" width="3" height="1" fill="#fff"/>
<rect x="701" y="447" width="1" height="36" fill="#000"/>
<rect x="699" y="450" width="5" height="30" fill="#000"/>
<rect x="709" y="476" width="1" height="31" fill="#000"/>
<rect x="707" y="478" width="5" height="13" fill="#000"/>
<rect x="717" y="480" width="1" height="18" fill="#000"/>
<rect x="715" y="486" width="5" height="4" fill="#000"/>
<rect x="716" y="487" width="3" height="2" fill="#fff"/>
<rect x="725" y="484" width="1" height="21" fill="#000"/>
<rect x="723" y="485" width="5" height="14" fill="#000"/>
<rect x="733" y="490" width="1" height="21" fill="#000"/>
<rect x="731" y="498" width="5" height="13" fill="#000"/>
<rect x="741" y="497" width="1" height="21" fill="#000"/>
<rect x="739" y="514" width="5" height="2" fill="#000"/>
<rect x="749" y="503" width="1" height="14" fill="#000"/>
<rect x="747" y="511" width="5" height="5" fill="#000"/>
<rect x="748" y="512" width="3" height="3" fill="#fff"/>
<rect x="757" y="507" width="1" height="13" fill="#000"/>
<rect x="755" y="511" width="5" height="6" fill="#000"/>
<rect x="765" y="509" width="1" height="10" fill="#000"/>
<rect x="763" y="515" width="5" height="1" fill="#000"/>
<rect x="773" y="511" width="1" height="27" fill="#000"/>
<rect x="771" y="515" width="5" height="18" fill="#000"/>
<rect x="781" y="511" width="1" height="38" fill="#000"/>
<rect x="779" y="522" width="5" height="11" fill="#000"/>
<rect x="780" y="523" width="3" height="9" fill="#fff"/>
<rect x="789" y="496" width="1" height="34" fill="#000"/>
<rect x="787" y="504" width="5" height="21" fill="#000"/>
<rect x="788" y="505" width="3" height="19" fill="#fff"/>
<rect x="797" y="490" width="1" height="17" fill="#000"/>
<rect x="795" y="500" width="5" height="4" fill="#000"/>
<rect x="796" y="501" width="3" height="2" fill="#fff"/>
<rect x="805" y="472" width="1" height="29" fill="#000"/>
<rect x="803" y="483" width="5" height="17" fill="#000"/>
<rect x="804" y="484" width="3" height="15" fill="#fff"/>
<rect x="813" y="479" width="1" height="26" fill="#000"/>
<rect x="811" y="483" width="5" height="19" fill="#000"/>
<rect x="821" y="488" width="1" height="18" fill="#000"/>
<rect x="819" y="497" width="5" height="4" fill="#000"/>
<rect x="820" y="498" width="3" height="2" fill="#fff"/>
<rect x="829" y="491" width="1" height="25" fill="#000"/>
<rect x="827" y="497" width="5" height="19" fill="#000"/>
<rect x="837" y="487" width="1" height="28" fill="#000"/>
<rect x="835" y="494" width="5" height="19" fill="#000"/>
<rect x="836" y="495" width="3" height="17" fill="#fff"/>
<rect x="845" y="487" width="1" height="15" fill="#000"/>
<rect x="843" y="494" width="5" height="4" fill="#000"/>
<rect x="853" y="489" width="1" height="13" fill="#000"/>
<rect x="851" y="489" width="5" height="8" fill="#000"/>
<rect x="852" y="490" width="3" height="6" fill="#fff"/>
<rect x="861" y="474" width="1" height="18" fill="#000"/>
<rect x="859" y="476" width="5" height="14" fill="#000"/>
<rect x="860" y="477" width="3" height="12" fill="#fff"/>
<rect x="869" y="470" width="1" height="20" fill="#000"/>
<rect x="867" y="476" width="5" height="12" fill="#000"/>
<rect x="877" y="485" width="1" height="28" fill="#000"/>
<rect x="875" y="487" width="5" height="8" fill="#000"/>
<rect x="885" y="498" width="1" height="27" fill="#000"/>
<rect x="883" y="502" width="5" height="17" fill="#000"/>
<rect x="884" y="503" width="3" height="15" fill="#fff"/>
<rect x="893" y="468" width="1" height="40" fill="#000"/>
<rect x="891" y="478" width="5" height="24" fill="#000"/>
<rect x="892" y="479" width="3" height="22" fill="#fff"/>
<rect x="901" y="478" width="1" height="17" fill="#000"/>
<rect x="899" y="478" width="5" height="10" fill="#000"/>
<rect x="909" y="470" width="1" height="18" fill="#000"/>
<rect x="907" y="470" width="5" height="18" fill="#000"/>
<rect x="908" y="471" width="3" height="16" fill="#fff"/>
<rect x="917" y="469" width="1" height="10" fill="#000"/>
<rect x="915" y="470" width="5" height="8" fill="#000"/>
<rect x="925" y="470" width="1" height="11" fill="#000"/>
<rect x="923" y="476" width="5" height="2" fill="#000"/>
<rect x="933" y="458" width="1" height="24" fill="#000"/>
<rect x="931" y="468" width="5" height="8" fill="#000"/>
<rect x="932" y="469" width="3" height="6" fill="#fff"/>
<rect x="941" y="460" width="1" height="20" fill="#000"/>
<rect x="939" y="467" width="5" height="11" fill="#000"/>
<rect x="949" y="471" width="1" height="29" fill="#000"/>
<rect x="947" y="477" width="5" height="15" fill="#000"/>
<rect x="957" y="488" width="1" height="12" fill="#000"/>
<rect x="955" y="490" width="5" height="2" fill="#000"/>
<rect x="965" y="482" width="1" height="18" fill="#000"/>
<rect x="963" y="489" width="5" height="2" fill="#000"/>
<rect x="973" y="479" width="1" height="18" fill="#000"/>
<rect x="971" y="489" width="5" height="3" fill="#000"/>
<rect x="981" y="478" width="1" height="16" fill="#000"/>
<rect x="979" y="487" width="5" height="3" fill="#000"/>
<rect x="980" y="488" width="3" height="1" fill="#fff"/>
<rect x="989" y="483" width="1" height="27" fill="#000"/>
<rect x="987" y="487" width="5" height="17" fill="#000"/>
<rect x="997" y="489" width="1" height="20" fill="#000"/>
<rect x="995" y="503" width="5" height="4" fill="#000"/>
<rect x="1005" y="505" width="1" height="30" fill="#000"/>
<rect x="1003" y="505" width="5" height="20" fill="#000"/>
<rect x="1013" y="524" width="1" height="22" fill="#000"/>
<rect x="1011" y="524" width="5" height="21" fill="#000"/>
<rect x="1021" y="517" width="1" height="30" fill="#000"/>
<rect x="1019" y="529" width="5" height="15" fill="#000"/>
<rect x="1020" y="530" width="3" height="13" fill="#fff"/>
<rect x="1029" y="517" width="1" height="46" fill="#000"/>
<rect x="1027" y="528" width="5" height="28" fill="#000"/>
<rect x="1037" y="552" width="1" height="22" fill="#000"/>
<rect x="1035" y="555" width="5" height="14" fill="#000"/>
<path d="M1061.5,611 L1052.5,618.5 H1058.5 V629.5 H1064.5 V618.5 H1070 Z" fill="#fff" stroke="#ff0000" stroke-width="1.1" shape-rendering="auto"/>
<rect x="13" y="568" width="1304" height="1" fill="#778899"/>
<rect x="13" y="584" width="1304" height="2" fill="#0000cd"/>
<polygon points="1050,110 1059,110 1054.5,115" fill="#778899" shape-rendering="auto"/>
</g>
<rect x="12.5" y="109.5" width="1305" height="566" fill="none" stroke="#000" stroke-width="1"/>
<rect x="1318" y="111" width="3" height="1" fill="#000"/>
<rect x="1318" y="144" width="3" height="1" fill="#000"/>
<rect x="1318" y="177" width="3" height="1" fill="#000"/>
<rect x="1318" y="210" width="3" height="1" fill="#000"/>
<rect x="1318" y="243" width="3" height="1" fill="#000"/>
<rect x="1318" y="276" width="3" height="1" fill="#000"/>
<rect x="1318" y="309" width="3" height="1" fill="#000"/>
<rect x="1318" y="342" width="3" height="1" fill="#000"/>
<rect x="1318" y="375" width="3" height="1" fill="#000"/>
<rect x="1318" y="408" width="3" height="1" fill="#000"/>
<rect x="1318" y="441" width="3" height="1" fill="#000"/>
<rect x="1318" y="474" width="3" height="1" fill="#000"/>
<rect x="1318" y="507" width="3" height="1" fill="#000"/>
<rect x="1318" y="540" width="3" height="1" fill="#000"/>
<rect x="1318" y="573" width="3" height="1" fill="#000"/>
<rect x="1318" y="606" width="3" height="1" fill="#000"/>
<rect x="1318" y="639" width="3" height="1" fill="#000"/>
<rect x="1318" y="672" width="3" height="1" fill="#000"/>
<rect x="13" y="676" width="1" height="4" fill="#000"/>
<rect x="77" y="676" width="1" height="4" fill="#000"/>
<rect x="141" y="676" width="1" height="4" fill="#000"/>
<rect x="205" y="676" width="1" height="4" fill="#000"/>
<rect x="269" y="676" width="1" height="4" fill="#000"/>
<rect x="333" y="676" width="1" height="4" fill="#000"/>
<rect x="397" y="676" width="1" height="4" fill="#000"/>
<rect x="461" y="676" width="1" height="4" fill="#000"/>
<rect x="525" y="676" width="1" height="4" fill="#000"/>
<rect x="589" y="676" width="1" height="4" fill="#000"/>
<rect x="653" y="676" width="1" height="4" fill="#000"/>
<rect x="717" y="676" width="1" height="4" fill="#000"/>
<rect x="781" y="676" width="1" height="4" fill="#000"/>
<rect x="845" y="676" width="1" height="4" fill="#000"/>
<rect x="909" y="676" width="1" height="4" fill="#000"/>
<rect x="973" y="676" width="1" height="4" fill="#000"/>
<rect x="1037" y="676" width="1" height="4" fill="#000"/>
<rect x="1319" y="562" width="41" height="11" fill="#000"/>
<rect x="1319" y="579" width="41" height="11" fill="#0000cd"/>
</svg>
<div class="pl" style="top:106px">1.11325</div>
<div class="pl" style="top:139px">1.11030</div>
<div class="pl" style="top:172px">1.10735</div>
<div class="pl" style="top:205px">1.10440</div>
<div class="pl" style="top:238px">1.10150</div>
<div class="pl" style="top:271px">1.09855</div>
<div class="pl" style="top:304px">1.09560</div>
<div class="pl" style="top:337px">1.09270</div>
<div class="pl" style="top:370px">1.08975</div>
<div class="pl" style="top:403px">1.08680</div>
<div class="pl" style="top:436px">1.08385</div>
<div class="pl" style="top:469px">1.08095</div>
<div class="pl" style="top:502px">1.07800</div>
<div class="pl" style="top:535px">1.07505</div>
<div class="pl" style="top:568px">1.07215</div>
<div class="pl" style="top:601px">1.06920</div>
<div class="pl" style="top:634px">1.06625</div>
<div class="pl" style="top:667px">1.06330</div>
<div class="pl" style="top:563px;color:#fff">1.07261</div>
<div class="pl" style="top:580px;color:#fff">1.07110</div>
<div class="tl" style="left:12.5px">27 May 2014</div>
<div class="tl" style="left:76px">29 May 04:00</div>
<div class="tl" style="left:140px">30 May 12:00</div>
<div class="tl" style="left:204px">2 Jun 20:00</div>
<div class="tl" style="left:268px">4 Jun 04:00</div>
<div class="tl" style="left:332px">5 Jun 12:00</div>
<div class="tl" style="left:396px">6 Jun 20:00</div>
<div class="tl" style="left:460px">10 Jun 04:00</div>
<div class="tl" style="left:524px">11 Jun 12:00</div>
<div class="tl" style="left:588px">12 Jun 20:00</div>
<div class="tl" style="left:652px">16 Jun 04:00</div>
<div class="tl" style="left:716px">17 Jun 12:00</div>
<div class="tl" style="left:780px">18 Jun 20:00</div>
<div class="tl" style="left:844px">20 Jun 04:00</div>
<div class="tl" style="left:908px">23 Jun 12:00</div>
<div class="tl" style="left:972px">24 Jun 20:00</div>
<div class="tl" style="left:1036px">26 Jun 04:00</div>
<div class="a" style="left:13px;top:112px;width:218px;height:11px;background:#fff"></div>
<svg class="a" style="left:0;top:0" width="30" height="130"><polygon points="16,116 23,116 19.5,119.5" fill="#000"/></svg>
<div class="t" style="left:29px;top:114px;font-size:9.5px;letter-spacing:-0.07px">AUDNZD,H4</div>
<div class="t" style="left:89.5px;top:114px;font-size:9.5px;letter-spacing:-0.25px">1.07372</div>
<div class="t" style="left:125.3px;top:114px;font-size:9.5px;letter-spacing:-0.25px">1.07400</div>
<div class="t" style="left:161.3px;top:114px;font-size:9.5px;letter-spacing:-0.25px">1.07209</div>
<div class="t" style="left:197.4px;top:114px;font-size:9.5px;letter-spacing:-0.25px">1.07261</div>
<div class="tb" style="left:8px;top:694px;width:1354px;height:42px"></div>
<div class="a" style="left:8px;top:693px;width:1354px;height:1px;background:#e0e0e0"></div>
<div class="a" style="left:8px;top:695px;width:1354px;height:1px;background:#000"></div>
<div class="a" style="left:936px;top:695px;width:80px;height:19px;background:#fff;border:1px solid #000;border-top:none"></div>
<div class="tab" style="left:22px">EURUSD,H1</div>
<div class="tab" style="left:103px">GBPUSD,Daily</div>
<div class="tab" style="left:192px">USDJPY,Daily</div>
<div class="tab" style="left:280px">EURJPY,Daily</div>
<div class="tab" style="left:368px">GBPCHF,H4</div>
<div class="tab" style="left:446px">AUDUSD,H1</div>
<div class="tab" style="left:526px">NZDUSD,H4</div>
<div class="tab" style="left:605px">EURCHF,Daily</div>
<div class="tab" style="left:694px">XAUUSD,H4</div>
<div class="tab" style="left:774px">EURGBP,Daily</div>
<div class="tab" style="left:861px">GBPJPY,Daily</div>
<div class="tab" style="left:1026px">USDCAD,H4</div>
<div class="tab" style="left:1107px">USDCHF,H1</div>
<div class="tab" style="left:947px;color:#000">AUDNZD,H4</div>
<div class="sep" style="left:92px;top:699px;height:13px"></div>
<div class="sep" style="left:181px;top:699px;height:13px"></div>
<div class="sep" style="left:269px;top:699px;height:13px"></div>
<div class="sep" style="left:357px;top:699px;height:13px"></div>
<div class="sep" style="left:437px;top:699px;height:13px"></div>
<div class="sep" style="left:517px;top:699px;height:13px"></div>
<div class="sep" style="left:596px;top:699px;height:13px"></div>
<div class="sep" style="left:684px;top:699px;height:13px"></div>
<div class="sep" style="left:765px;top:699px;height:13px"></div>
<div class="sep" style="left:852px;top:699px;height:13px"></div>
<div class="sep" style="left:1096px;top:699px;height:13px"></div>
<div class="sep" style="left:1176px;top:699px;height:13px"></div>
<div class="a" style="left:8px;top:696px;width:2px;height:18px;background:#6e6e6e"></div>
<div class="t" style="left:10px;top:721px;font-size:11.5px;line-height:12px">Для справки, нажмите F1</div>
<div class="t" style="left:642px;top:721px;font-size:11.5px;line-height:12px">Default</div>
<div class="t" style="left:1266px;top:721px;font-size:11.5px;line-height:12px">928/1 kb</div>
<div class="sep" style="left:636px;top:717px;height:16px;background:#a0a0a0"></div>
<div class="sep" style="left:753px;top:717px;height:16px;background:#a0a0a0"></div>
<div class="sep" style="left:855px;top:717px;height:16px;background:#a0a0a0"></div>
<div class="sep" style="left:925px;top:717px;height:16px;background:#a0a0a0"></div>
<div class="sep" style="left:996px;top:717px;height:16px;background:#a0a0a0"></div>
<div class="sep" style="left:1065px;top:717px;height:16px;background:#a0a0a0"></div>
<div class="sep" style="left:1134px;top:717px;height:16px;background:#a0a0a0"></div>
<div class="sep" style="left:1200px;top:717px;height:16px;background:#a0a0a0"></div>
<div class="a" style="left:8px;top:736px;width:1362px;height:8px;background:#3f8c62"></div>
<svg width="1370" height="744" viewBox="0 0 1370 744" style="position:absolute;left:0;top:0;pointer-events:none">
<defs><linearGradient id="ai" x1="0" y1="0" x2="0" y2="1"><stop offset="0" stop-color="#ffe2c0"/><stop offset="0.5" stop-color="#f7a040"/><stop offset="1" stop-color="#e07a10"/></linearGradient></defs>
<path d="M11,8 h14 v12 q0,3 -7,3 q-7,0 -7,-3 z" fill="url(#ai)"/>
<path d="M13,9 v6 M16,8.5 v6 M19,8.5 v6 M22,9 v5" stroke="#ffd8b0" stroke-width="1.2" opacity="0.7"/>
<path d="M11,17.5 q7,0.5 14,-3 v5.5 q0,3.2 -7,3.2 q-7,0 -7,-3.2 z" fill="#2a1206"/>
<rect x="1274" y="13" width="8" height="2" fill="#1a1a1a"/>
<rect x="1300.5" y="8.5" width="9" height="6" fill="none" stroke="#1e1e1e" stroke-width="1"/>
<path d="M1337,8 l7.5,7 M1344.5,8 l-7.5,7" stroke="#fff" stroke-width="1.6"/>
<rect x="8" y="30" width="1354" height="1" fill="#4f9d74"/>
<rect x="1369" y="31" width="1" height="705" fill="#4aa076"/>
<rect x="1360" y="105" width="1" height="589" fill="#e0e0e0"/>
<rect x="1361" y="31" width="1" height="74" fill="#fff"/>
<polygon points="1337,707 1337,701 1334,704" fill="#a8a8a8"/>
<polygon points="1351,701 1351,707 1354,704" fill="#a8a8a8"/>
<rect x="8" y="715" width="1352" height="1" fill="#fafafa"/>
<rect x="1206" y="721" width="2" height="10" fill="#4e6a00"/>
<rect x="1206" y="731" width="2" height="2" fill="#a01400"/>
<rect x="1209" y="721" width="2" height="9" fill="#4e6a00"/>
<rect x="1209" y="730" width="2" height="3" fill="#a01400"/>
<rect x="1212" y="721" width="2" height="8" fill="#4e6a00"/>
<rect x="1212" y="729" width="2" height="4" fill="#a01400"/>
<rect x="1215" y="721" width="2" height="7" fill="#4e6a00"/>
<rect x="1215" y="728" width="2" height="5" fill="#a01400"/>
<rect x="1218" y="721" width="2" height="6" fill="#4e6a00"/>
<rect x="1218" y="727" width="2" height="6" fill="#a01400"/>
<rect x="1221" y="721" width="2" height="5" fill="#4e6a00"/>
<rect x="1221" y="726" width="2" height="7" fill="#a01400"/>
<rect x="1224" y="721" width="2" height="4" fill="#4e6a00"/>
<rect x="1224" y="725" width="2" height="8" fill="#a01400"/>
<rect x="1227" y="721" width="2" height="3" fill="#4e6a00"/>
<rect x="1227" y="724" width="2" height="9" fill="#a01400"/>
<path d="M1357,736 L1362,731" stroke="#a8a8a8" stroke-width="2"/>
<path d="M1353,736 L1362,727" stroke="#a8a8a8" stroke-width="2"/>
<path d="M1349,736 L1362,723" stroke="#a8a8a8" stroke-width="2"/>
<rect x="8" y="736" width="1362" height="8" fill="#4a9871"/>
<rect x="8" y="736" width="1362" height="1" fill="#3f8a63"/>
<rect x="60.5" y="737.5" width="57" height="8" fill="#6cae8b" stroke="#8cc4a6" stroke-width="1"/>
<rect x="246.5" y="737.5" width="57" height="8" fill="#6cae8b" stroke="#8cc4a6" stroke-width="1"/>
<rect x="308.5" y="737.5" width="57" height="8" fill="#6cae8b" stroke="#8cc4a6" stroke-width="1"/>
<rect x="370.5" y="737.5" width="57" height="8" fill="#6cae8b" stroke="#8cc4a6" stroke-width="1"/>
<rect x="432.5" y="737.5" width="57" height="8" fill="#6cae8b" stroke="#8cc4a6" stroke-width="1"/>
<rect x="494.5" y="737.5" width="57" height="8" fill="#a9b890" stroke="#f0d8b0" stroke-width="1"/>
<path d="M37,744 l5,-1.5 h4 v1.5 z" fill="#f0f0f0"/>
<ellipse cx="89" cy="748" rx="7.5" ry="6" fill="#e04a3a"/>
<rect x="136" y="741" width="30" height="3" fill="#109010"/>
<polygon points="196,744 216,741 216,744" fill="#2a5aa8"/>
<ellipse cx="272" cy="745" rx="10" ry="4" fill="#10a8e8"/>
<rect x="322" y="741" width="18" height="4" rx="1" fill="#5aa8e8"/>
<rect x="383.5" y="740.5" width="31" height="5" rx="1.5" fill="#9ccaf0" stroke="#3a78b8" stroke-width="0.8"/>
<rect x="446" y="741" width="18" height="4" rx="1" fill="#5aa8e8"/>
<ellipse cx="523" cy="750" rx="12" ry="9" fill="#f59a20"/>
</svg>
</body></html>
